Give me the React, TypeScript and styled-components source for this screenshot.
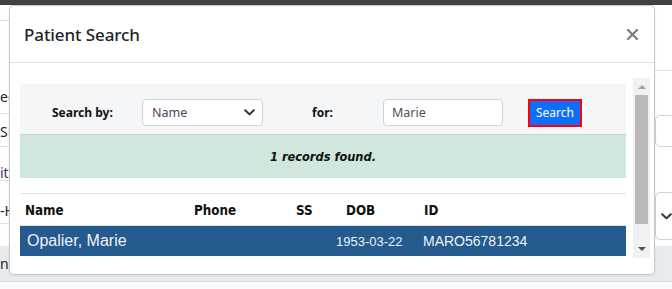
import React from "react";
import styled, { createGlobalStyle } from "styled-components";

const Global = createGlobalStyle`
  html, body { margin: 0; padding: 0; background: #ffffff; overflow: hidden; }
  body { width: 672px; height: 289px; font-family: "Noto Sans", "Open Sans", sans-serif; color: #212529; }
  * { box-sizing: border-box; }
`;

const Page = styled.div`
  position: relative;
  width: 672px;
  height: 289px;
  overflow: hidden;
  display: flex;
  flex-direction: column;
`;

const TopBar = styled.div`
  height: 5px;
  background: #424242;
  flex: none;
`;

const Main = styled.div`
  height: 241px;
  display: flex;
  justify-content: space-between;
  flex: none;
`;

const LeftCol = styled.div`
  width: 60px;
  display: flex;
  flex-direction: column;
`;

const LeftRow = styled.div<{ $h: number; $pt: number; $line?: boolean; $color?: string }>`
  height: ${(p) => p.$h}px;
  padding-top: ${(p) => p.$pt}px;
  border-bottom: ${(p) => (p.$line ? "1px solid #dee2e6" : "none")};
  font-size: 14px;
  line-height: 18px;
  color: ${(p) => p.$color || "#212529"};
  white-space: nowrap;
`;

const RightCol = styled.div`
  width: 17px;
  display: flex;
  flex-direction: column;
  overflow: visible;
`;

const RightLine = styled.div`
  height: 66px;
  border-bottom: 1px solid #dee2e6;
  width: 40px;
`;

const RightBox = styled.div<{ $mt: number; $h: number }>`
  margin-top: ${(p) => p.$mt}px;
  height: ${(p) => p.$h}px;
  width: 40px;
  border: 1px solid #ced4da;
  border-radius: 5px;
  display: flex;
  align-items: center;
  padding-left: 5px;
`;

const Footer = styled.div`
  height: 36px;
  background: #e9ecef;
  border-bottom: 1px solid #d6d8db;
  display: flex;
  align-items: center;
  font-size: 14px;
  color: #212529;
  flex: none;
`;

const Rest = styled.div`
  flex: 1;
  background: #f8f9fa;
`;

/* Modal */
const Modal = styled.div`
  position: absolute;
  left: 9px;
  top: 5px;
  width: 646px;
  height: 270px;
  background: #ffffff;
  border: 1px solid rgba(0, 0, 0, 0.22);
  border-radius: 5px;
  display: flex;
  flex-direction: column;
  box-shadow: 0 1px 3px rgba(0, 0, 0, 0.08);
`;

const ModalHeader = styled.div`
  height: 57px;
  flex: none;
  border-bottom: 1px solid #dee2e6;
  display: flex;
  align-items: center;
  justify-content: space-between;
  padding: 0 16px 0 14px;
`;

const Title = styled.h5`
  margin: 0;
  font-family: "Noto Sans", "Open Sans", sans-serif;
  font-size: 17px;
  font-weight: 500;
  color: #212529;
  letter-spacing: -0.1px;
`;

const CloseBtn = styled.button`
  border: 0;
  background: transparent;
  padding: 0;
  width: 12px;
  height: 12px;
  display: flex;
  align-items: center;
  justify-content: center;
  cursor: pointer;
`;

const ModalBody = styled.div`
  flex: 1;
  padding: 15px 4px 0 10px;
  display: flex;
`;

const ScrollArea = styled.div`
  height: 180px;
  display: flex;
  gap: 7px;
`;

const ScrollContent = styled.div`
  width: 606px;
  height: 180px;
  overflow: hidden;
  padding-top: 6px;
`;

const SearchPanel = styled.div`
  height: 50px;
  background: #f5f6f8;
  display: grid;
  grid-template-columns: 90px 170px 71px 145px auto;
  align-items: center;
  padding: 7px 0 0 32px;
`;

const Label = styled.label`
  font-family: "Noto Sans", "Open Sans", sans-serif;
  font-weight: 700;
  font-size: 12px;
  color: #111;
`;

const SelectBox = styled.div`
  width: 121px;
  height: 27px;
  border: 1px solid #ced4da;
  border-radius: 4px;
  background: #fff;
  display: flex;
  align-items: center;
  justify-content: space-between;
  padding: 0 7px 0 9px;
  font-size: 12.5px;
  color: #4a4560;
`;

const TextInput = styled.div`
  width: 120px;
  height: 27px;
  border: 1px solid #ced4da;
  border-radius: 4px;
  background: #fff;
  display: flex;
  align-items: center;
  padding-left: 8px;
  font-size: 12.5px;
  color: #495057;
`;

const SearchButton = styled.button`
  width: 54px;
  height: 28px;
  border: 2px solid #ff0000;
  background: #0d6efd;
  color: #ffffff;
  font-family: "Noto Sans", "Open Sans", sans-serif;
  font-size: 12px;
  padding: 0;
  border-radius: 0;
  display: flex;
  align-items: center;
  justify-content: center;
`;

const Alert = styled.div`
  height: 44px;
  background: #d1e7dd;
  border-top: 1px solid #bcdccb;
  display: flex;
  align-items: center;
  justify-content: center;
  font-family: "DejaVu Sans Condensed", "DejaVu Sans", sans-serif;
  font-stretch: condensed;
  font-weight: 700;
  font-style: italic;
  font-size: 12.7px;
  color: #111;
`;

const Table = styled.div`
  margin-top: 15px;
  border-top: 1px solid #dee2e6;
`;

const Grid = styled.div`
  display: grid;
  grid-template-columns: 169px 102px 40px 87px 1fr;
  align-items: center;
`;

const HeadRow = styled(Grid)`
  height: 32px;
  border-bottom: 1px solid #dee2e6;
`;

const HeadCell = styled.div<{ $shift?: number }>`
  padding-left: ${(p) => 5 + (p.$shift || 0)}px;
  font-family: "DejaVu Sans Condensed", "DejaVu Sans", sans-serif;
  font-stretch: condensed;
  font-weight: 700;
  font-size: 13.3px;
  color: #111;
  padding-top: 1px;
`;

const DataRow = styled(Grid)`
  height: 30px;
  background: #245a8d;
  color: #eef3f8;
`;

const DataCell = styled.div<{ $size: number; $pl?: number }>`
  padding-left: ${(p) => p.$pl ?? 5}px;
  font-family: "Liberation Sans", Arial, sans-serif;
  font-size: ${(p) => p.$size}px;
`;

const ScrollBar = styled.div`
  width: 17px;
  height: 180px;
  background: #f1f1f1;
  display: flex;
  flex-direction: column;
`;

const ScrollBtn = styled.div`
  height: 17px;
  display: flex;
  align-items: center;
  justify-content: center;
  flex: none;
`;

const ScrollTrack = styled.div`
  flex: 1;
  padding: 0 2px;
`;

const Thumb = styled.div`
  height: 129px;
  background: #b9b9b9;
`;

const Triangle = ({ up, color }: { up?: boolean; color: string }) => (
  <svg width="8" height="5" viewBox="0 0 8 5">
    <path d={up ? "M0 5 L4 1 L8 5 Z" : "M0 0 L8 0 L4 4 Z"} fill={color} />
  </svg>
);

const Chevron = () => (
  <svg width="11" height="7" viewBox="0 0 11 7">
    <path d="M1.2 1.2 L5.5 5.4 L9.8 1.2" fill="none" stroke="#333" strokeWidth="2" strokeLinecap="round" strokeLinejoin="round" />
  </svg>
);

const CloseIcon = () => (
  <svg width="11" height="11" viewBox="0 0 11 11">
    <path d="M1 1 L10 10 M10 1 L1 10" stroke="#7b7b7b" strokeWidth="2.2" strokeLinecap="round" />
  </svg>
);

export default function App() {
  return (
    <>
      <Global />
      <Page>
        <TopBar />
        <Main>
          <LeftCol>
            <LeftRow $h={16} $pt={0} $line />
            <LeftRow $h={93} $pt={67} $line>eg</LeftRow>
            <LeftRow $h={33} $pt={9} $line>SR</LeftRow>
            <LeftRow $h={34} $pt={17} $line $color="#4b2e6e">it</LeftRow>
            <LeftRow $h={43} $pt={21} $line>-H</LeftRow>
          </LeftCol>
          <RightCol>
            <RightLine />
            <RightBox $mt={44} $h={32} />
            <RightBox $mt={45} $h={48}>
              <Chevron />
            </RightBox>
          </RightCol>
        </Main>
        <Footer>nt</Footer>
        <Rest />

        <Modal>
          <ModalHeader>
            <Title>Patient Search</Title>
            <CloseBtn aria-label="Close">
              <CloseIcon />
            </CloseBtn>
          </ModalHeader>
          <ModalBody>
            <ScrollArea>
              <ScrollContent>
                <SearchPanel>
                  <Label>Search by:</Label>
                  <div>
                    <SelectBox>
                      <span>Name</span>
                      <Chevron />
                    </SelectBox>
                  </div>
                  <Label>for:</Label>
                  <div>
                    <TextInput>Marie</TextInput>
                  </div>
                  <div>
                    <SearchButton>Search</SearchButton>
                  </div>
                </SearchPanel>
                <Alert>1 records found.</Alert>
                <Table>
                  <HeadRow>
                    <HeadCell>Name</HeadCell>
                    <HeadCell>Phone</HeadCell>
                    <HeadCell>SS</HeadCell>
                    <HeadCell $shift={10}>DOB</HeadCell>
                    <HeadCell $shift={1}>ID</HeadCell>
                  </HeadRow>
                  <DataRow>
                    <DataCell $size={16} $pl={7}>Opalier, Marie</DataCell>
                    <DataCell $size={13} />
                    <DataCell $size={13} />
                    <DataCell $size={13}>1953-03-22</DataCell>
                    <DataCell $size={14}>MARO56781234</DataCell>
                  </DataRow>
                </Table>
              </ScrollContent>
              <ScrollBar>
                <ScrollBtn>
                  <Triangle up color="#a3a3a3" />
                </ScrollBtn>
                <ScrollTrack>
                  <Thumb />
                </ScrollTrack>
                <ScrollBtn>
                  <Triangle color="#505050" />
                </ScrollBtn>
              </ScrollBar>
            </ScrollArea>
          </ModalBody>
        </Modal>
      </Page>
    </>
  );
}
